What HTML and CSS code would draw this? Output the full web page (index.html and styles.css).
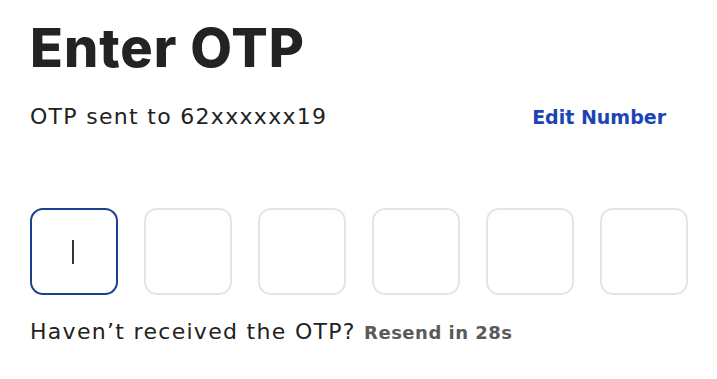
FILE: index.html
```html
<!DOCTYPE html>
<html lang="en">
<head>
<meta charset="utf-8">
<title>Enter OTP</title>
<link rel="stylesheet" href="styles.css">
</head>
<body>
<main class="page">
  <h1 class="title">Enter OTP</h1>
  <div class="sent-row">
    <span class="sent">OTP sent to 62xxxxxx19</span>
    <a class="edit" href="#">Edit Number</a>
  </div>
  <div class="otp">
    <div class="box focused"><span class="caret"></span></div>
    <div class="box"></div>
    <div class="box"></div>
    <div class="box"></div>
    <div class="box"></div>
    <div class="box"></div>
  </div>
  <p class="resend-line">Haven’t received the OTP? <span class="resend">Resend in 28s</span></p>
</main>
</body>
</html>
```

FILE: styles.css
```css
html, body {
  margin: 0;
  padding: 0;
  background: #ffffff;
}
body {
  font-family: "DejaVu Sans", "Liberation Sans", sans-serif;
  color: #222222;
}
.page {
  padding: 16px 29px 0 30px;
}
.title {
  margin: 0;
  font-family: "Inter", "Liberation Sans", sans-serif;
  font-size: 54px;
  font-weight: 800;
  line-height: 64px;
  letter-spacing: 1px;
  color: #232323;
}
.sent-row {
  display: flex;
  justify-content: space-between;
  align-items: baseline;
  margin-top: 24px;
  padding-right: 22px;
}
.sent {
  font-size: 22px;
  letter-spacing: 1.3px;
  color: #222222;
}
.edit {
  font-size: 19px;
  font-weight: 700;
  color: #1b45b5;
  text-decoration: none;
}
.otp {
  display: flex;
  gap: 26px;
  margin-top: 79px;
}
.box {
  box-sizing: border-box;
  width: 88px;
  height: 87px;
  border: 2px solid #dfe7ed;
  border-radius: 13px;
  display: flex;
  align-items: center;
  justify-content: center;
}
.box.focused {
  border-color: #1c3f8f;
}
.caret {
  width: 2px;
  height: 24px;
  margin-left: -2px;
  background: #333333;
}
.resend-line {
  margin: 24px 0 0;
  font-size: 22px;
  letter-spacing: 1.3px;
  color: #222222;
}
.resend {
  font-size: 18px;
  font-weight: 700;
  letter-spacing: 0.5px;
  color: #5a5a5a;
}
```
